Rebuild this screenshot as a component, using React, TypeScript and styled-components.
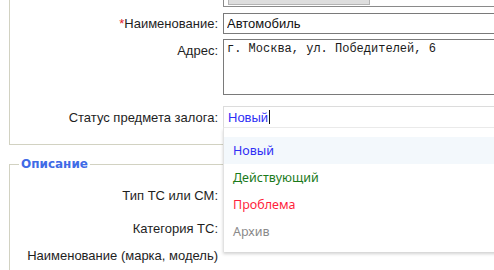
import React from 'react'
import styled, { createGlobalStyle } from 'styled-components'

const GlobalStyle = createGlobalStyle`
  html, body {
    margin: 0;
    padding: 0;
    background: #fff;
    overflow: hidden;
  }
  body {
    font-family: "Liberation Sans", Arial, sans-serif;
    font-size: 13px;
    color: #1e1e1e;
  }
`

const statuses = [
  { name: 'Новый', color: '#2f2ff5', active: true },
  { name: 'Действующий', color: '#1b7a1b', active: false },
  { name: 'Проблема', color: '#ff1f3d', active: false },
  { name: 'Архив', color: '#8a8a8a', active: false },
]

const App = () => {
  return (
    <Page>
      <GlobalStyle />
      <Fieldset>
        <Row $top={0} $height={36}>
          <Label />
          <TopBox>
            <GreyButton />
          </TopBox>
        </Row>
        <Row $top={6}>
          <Label>
            <Req>*</Req>Наименование:
          </Label>
          <TextInput readOnly value="Автомобиль" />
        </Row>
        <Row $top={5} $align="start">
          <Label $pad={4}>Адрес:</Label>
          <TextArea readOnly value="г. Москва, ул. Победителей, 6" />
        </Row>
        <Row $top={11}>
          <Label>Статус предмета залога:</Label>
          <FieldWrap>
            <StatusInput>
              Новый<Caret />
            </StatusInput>
            <Dropdown>
              {statuses.map((s) => (
                <Option key={s.name} $color={s.color} $active={s.active}>
                  {s.name}
                </Option>
              ))}
            </Dropdown>
          </FieldWrap>
        </Row>
      </Fieldset>

      <Fieldset $second>
        <Legend>Описание</Legend>
        <Row $top={13}>
          <Label>Тип ТС или СМ:</Label>
          <Blank />
        </Row>
        <Row $top={11}>
          <Label>Категория ТС:</Label>
          <Blank />
        </Row>
        <Row $top={5}>
          <Label>Наименование (марка, модель)</Label>
          <Blank />
        </Row>
      </Fieldset>
    </Page>
  )
}

export default App

const Page = styled.div`
  margin-top: -40px;
  padding-left: 9px;
  width: 600px;
`
const Fieldset = styled.fieldset<{ $second?: boolean }>`
  margin: ${(p) => (p.$second ? '12px 0 0 0' : '0')};
  padding: ${(p) => (p.$second ? '0 0 20px 0' : '10px 0 16px 0')};
  border: 1px solid #d2d2c2;
  min-width: 0;
`
const Legend = styled.legend`
  margin-left: 9px;
  padding: 0 2px;
  font-family: "DejaVu Sans", Verdana, sans-serif;
  font-weight: bold;
  font-size: 12px;
  color: #3f6be6;
`
const Row = styled.div<{ $top: number; $height?: number; $align?: string }>`
  display: grid;
  grid-template-columns: 208px 1fr;
  column-gap: 5px;
  align-items: ${(p) => p.$align || 'center'};
  margin-top: ${(p) => p.$top}px;
  height: ${(p) => (p.$height ? `${p.$height}px` : 'auto')};
`
const Label = styled.div<{ $pad?: number }>`
  text-align: right;
  white-space: nowrap;
  padding-top: ${(p) => p.$pad || 0}px;
`
const Req = styled.span`
  color: #e0202a;
`
const TopBox = styled.div`
  height: 100%;
  box-sizing: border-box;
  border: 1px solid #8a8a8a;
  border-top: none;
  display: flex;
  align-items: flex-end;
  padding: 0 4px 1px;
`
const GreyButton = styled.div`
  width: 140px;
  height: 10px;
  background: #dedede;
  border: 1px solid #b4b4b4;
  border-top: none;
`
const TextInput = styled.input`
  box-sizing: border-box;
  height: 21px;
  width: 100%;
  margin: 0;
  padding: 0 3px;
  border: 1px solid #7a7a7a;
  font-family: "Liberation Sans", Arial, sans-serif;
  font-size: 13px;
  color: #111;
  outline: none;
`
const TextArea = styled.textarea`
  box-sizing: border-box;
  height: 56px;
  width: 100%;
  margin: 0;
  padding: 2px 3px;
  border: 1px solid #7a7a7a;
  font-family: "Liberation Mono", "Courier New", monospace;
  font-size: 12px;
  line-height: 14px;
  color: #1a1a1a;
  resize: none;
  outline: none;
`
const FieldWrap = styled.div`
  position: relative;
`
const StatusInput = styled.div`
  box-sizing: border-box;
  height: 22px;
  border: 1px solid #dcdcdc;
  border-bottom-color: #ececec;
  padding: 0 4px;
  display: flex;
  align-items: center;
  color: #2f2ff5;
`
const Caret = styled.span`
  display: inline-block;
  width: 1px;
  height: 14px;
  background: #111;
  margin-left: 1px;
`
const Dropdown = styled.ul`
  position: absolute;
  top: 100%;
  left: 0;
  width: 300px;
  margin: 0;
  padding: 9px 0 7px;
  list-style: none;
  background: #fff;
  border-left: 1px solid #e2e2e2;
  box-shadow: 0 2px 3px rgba(0, 0, 0, 0.18);
  z-index: 2;
`
const Option = styled.li<{ $color: string; $active: boolean }>`
  height: 27px;
  line-height: 27px;
  padding-left: 9px;
  font-family: "Noto Sans", "Open Sans", sans-serif;
  font-size: 12.5px;
  color: ${(p) => p.$color};
  background: ${(p) => (p.$active ? '#f3f8fc' : 'transparent')};
`
const Blank = styled.div`
  height: 22px;
`
